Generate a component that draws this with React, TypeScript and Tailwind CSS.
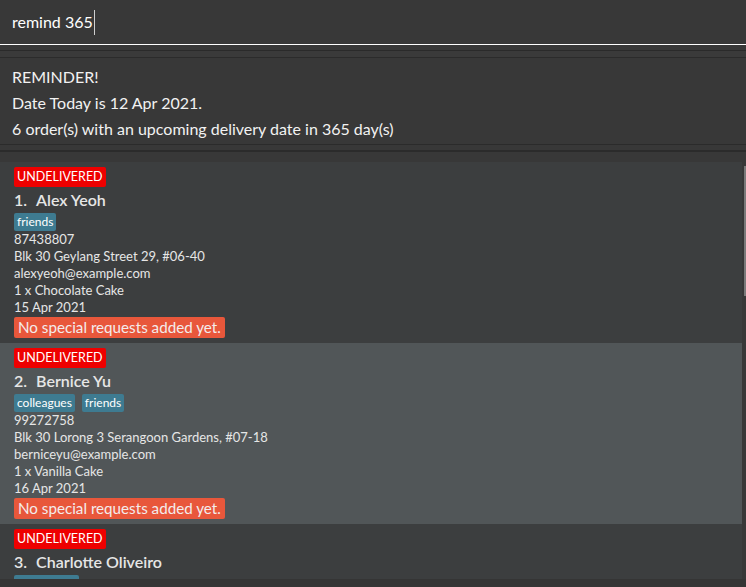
import React from "react";

type Order = {
  idx: number;
  name: string;
  tags: string[];
  phone: string;
  address: string;
  email: string;
  order: string;
  date: string;
};

const orders: Order[] = [
  {
    idx: 1,
    name: "Alex Yeoh",
    tags: ["friends"],
    phone: "87438807",
    address: "Blk 30 Geylang Street 29, #06-40",
    email: "alexyeoh@example.com",
    order: "1 x Chocolate Cake",
    date: "15 Apr 2021",
  },
  {
    idx: 2,
    name: "Bernice Yu",
    tags: ["colleagues", "friends"],
    phone: "99272758",
    address: "Blk 30 Lorong 3 Serangoon Gardens, #07-18",
    email: "berniceyu@example.com",
    order: "1 x Vanilla Cake",
    date: "16 Apr 2021",
  },
  {
    idx: 3,
    name: "Charlotte Oliveiro",
    tags: ["neighbours"],
    phone: "93210283",
    address: "Blk 11 Ang Mo Kio Street 74, #11-04",
    email: "charlotte@example.com",
    order: "1 x Strawberry Cake",
    date: "17 Apr 2021",
  },
];

function Card({ o, odd }: { o: Order; odd: boolean }) {
  return (
    <div
      className={`w-[742px] h-[181px] shrink-0 pl-[14px] pt-[5px] flex flex-col items-start ${
        odd ? "bg-[#515658]" : "bg-[#3c3e3f]"
      }`}
    >
      <div className="h-[20px] px-[3px] rounded-[2px] bg-[#ee0000] text-white text-[12.5px] leading-[20px]">
        UNDELIVERED
      </div>
      <div className="h-[26px] flex items-center text-[16px] font-semibold text-[#e6e6e6]">
        <span>{o.idx}.</span>
        <span className="ml-[9px]">{o.name}</span>
      </div>
      <div className="h-[18px] flex gap-[7px]">
        {o.tags.map((t) => (
          <span
            key={t}
            className="h-[18px] px-[3px] rounded-[2px] bg-[#3e7b91] text-white text-[12px] leading-[18px]"
          >
            {t}
          </span>
        ))}
      </div>
      <div className="text-[13px] leading-[17px] text-[#e6e6e6]">
        <div>{o.phone}</div>
        <div>{o.address}</div>
        <div>{o.email}</div>
        <div>{o.order}</div>
        <div>{o.date}</div>
      </div>
      <div className="mt-[1px] h-[21px] px-[4px] rounded-[2px] bg-[#e8573b] text-[#f4ecec] text-[15.2px] leading-[21px]">
        No special requests added yet.
      </div>
    </div>
  );
}

export default function App() {
  return (
    <div className="w-[746px] h-[587px] overflow-hidden bg-[#383838] flex flex-col font-['Segoe_UI','Lato',sans-serif]">
      {/* command box */}
      <div className="h-[45px] shrink-0 border-b border-white pl-[12px] flex items-center text-[16px] text-white">
        <span>remind 365</span>
        <span className="ml-[1px] w-[1px] h-[25px] bg-[#cfcfcf]" />
      </div>
      <div className="h-[5px] shrink-0" />
      <div className="h-[1px] shrink-0 bg-[#2a2a2a]" />
      <div className="h-[6px] shrink-0 bg-[#3a3a3a]" />
      <div className="h-[1px] shrink-0 bg-[#2b2b2b]" />
      {/* result display */}
      <div className="h-[87px] shrink-0 pl-[12px] pt-[6px] text-[16px] leading-[26px] text-[#f2f2f2] border-b border-[#2b2b2b]">
        <div>REMINDER!</div>
        <div>Date Today is 12 Apr 2021.</div>
        <div>6 order(s) with an upcoming delivery date in 365 day(s)</div>
      </div>
      <div className="h-[5px] shrink-0" />
      <div className="h-[2px] shrink-0 bg-[#2b2b2b]" />
      {/* list */}
      <div className="relative h-[427px] shrink-0 pt-[10px] overflow-hidden">
        <div className="flex flex-col">
          {orders.map((o, i) => (
            <Card key={o.idx} o={o} odd={i % 2 === 1} />
          ))}
        </div>
        <div className="absolute left-[744px] top-[14px] w-[2px] h-[130px] bg-[#7a7a7a]" />
      </div>
      <div className="flex-1 bg-[#353535]" />
    </div>
  );
}
